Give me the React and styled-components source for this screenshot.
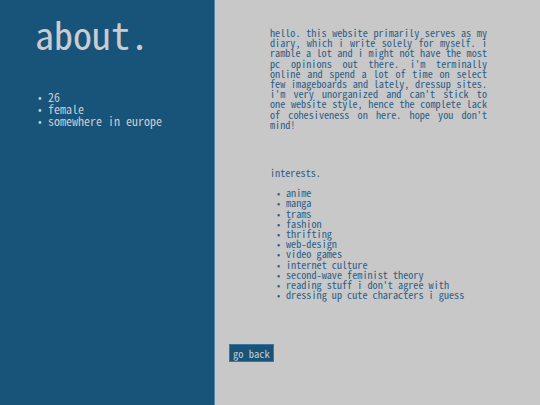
import styled, {createGlobalStyle} from 'styled-components'

const ABOUT = ['26', 'female', 'somewhere in europe']

const INTERESTS = [
  'anime',
  'manga',
  'trams',
  'fashion',
  'thrifting',
  'web-design',
  'video games',
  'internet culture',
  'second-wave feminist theory',
  "reading stuff i don't agree with",
  'dressing up cute characters i guess',
]

export default () => {
  return (
    <Page>
      <GlobalStyle/>
      <Side>
        <Title>about.</Title>
        <Facts>
          {ABOUT.map(item => <Item key={item}>{item}</Item>)}
        </Facts>
      </Side>
      <Main>
        <Content>
          <Intro>
            hello. this website primarily serves as my diary, which i write solely for myself.
            i ramble a lot and i might not have the most pc opinions out there. i'm terminally
            online and spend a lot of time on select few imageboards and lately, dressup sites.
            i'm very unorganized and can't stick to one website style, hence the complete lack
            of cohesiveness on here. hope you don't mind!
          </Intro>
          <Heading>interests.</Heading>
          <Interests>
            {INTERESTS.map(item => <Item key={item} $gap={9}>{item}</Item>)}
          </Interests>
        </Content>
        <BackBtn>go back</BackBtn>
      </Main>
    </Page>
  )
}

// Styled Components
const GlobalStyle = createGlobalStyle`
  html, body { margin: 0; padding: 0; }
  body {
    background: #c8c8c9;
    font-family: "Noto Sans Mono CJK JP", "Liberation Mono", monospace;
  }
`

const Page = styled.div`
  width: 540px;
  height: 405px;
  display: flex;
  overflow: hidden;
`

const Side = styled.aside`
  width: 215px;
  flex: none;
  color: #c9ccd0;
  background: #185379;
  padding: 12px 0 0 35px;
  box-sizing: border-box;
  border-right: 1px solid #5585ab;
`

const Title = styled.h1`
  margin: 0;
  font-size: 38px;
  font-weight: normal;
  line-height: 44px;
`

const Facts = styled.ul`
  margin: 35px 0 0;
  padding: 0 0 0 3px;
  list-style: none;
  font-size: 12px;
  line-height: 12px;
`

const Item = styled.li`
  display: flex;
  &::before {
    content: '•';
    width: ${p => p.$gap ?? 10}px;
    flex: none;
    font-size: 0.9em;
  }
`

const Main = styled.main`
  flex: 1;
  display: flex;
  flex-direction: column;
  color: #2c5e86;
`

const Content = styled.div`
  width: 217px;
  padding: 28px 0 0 55px;
  font-size: 10.2px;
  line-height: 10.2px;
`

const Intro = styled.p`
  margin: 0;
  text-align: justify;
`

const Heading = styled.p`
  margin: 38px 0 0;
`

const Interests = styled.ul`
  margin: 10px 0 0;
  padding: 0 0 0 7px;
  list-style: none;
`

const BackBtn = styled.button`
  align-self: flex-start;
  margin: 44px 0 0 14px;
  height: 18px;
  padding: 0 3px;
  color: #c9ccd0;
  font: inherit;
  font-size: 10.5px;
  cursor: pointer;
  background: #185379;
  border: 1px solid #3f76a0;
`
